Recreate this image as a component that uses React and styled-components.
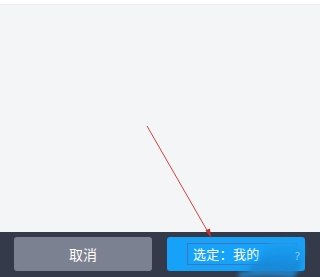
import React from 'react';
import styled, { createGlobalStyle } from 'styled-components';

const GlobalStyle = createGlobalStyle`
  html, body {
    margin: 0;
    padding: 0;
    background: #ffffff;
  }
  body {
    font-family: "Noto Sans CJK SC", "Noto Sans", sans-serif;
  }
`;

const Screen = styled.div`
  position: relative;
  width: 320px;
  height: 277px;
  display: flex;
  flex-direction: column;
  overflow: hidden;
  background: #ffffff;
`;

const Content = styled.div`
  flex: 1;
  margin-top: 4px;
  background: #f4f5f7;
  border-top: 1px solid #e9eaed;
`;

const BottomBar = styled.div`
  height: 45px;
  box-sizing: border-box;
  padding: 5px 15px 6px 14px;
  background: #343a49;
  display: flex;
  gap: 15px;
`;

const Button = styled.div`
  width: 138px;
  box-sizing: border-box;
  border-radius: 3px;
  display: flex;
  align-items: center;
  justify-content: ${p => (p.$primary ? 'flex-start' : 'center')};
  padding-left: ${p => (p.$primary ? '20px' : '0')};
  background: ${p => (p.$primary ? '#16a2f8' : '#7c8191')};
  color: #ffffff;
  font-size: 14px;
`;

const Label = styled.span`
  box-sizing: border-box;
  width: 110px;
  height: 22px;
  border: 1px solid #4a72b8;
  padding-left: 5px;
  font-size: 13px;
  line-height: 20px;
  letter-spacing: 0.3px;
`;

const Overlay = styled.svg`
  position: absolute;
  left: 0;
  top: 0;
  pointer-events: none;
`;

export default function App() {
  return (
    <>
      <GlobalStyle />
      <Screen>
        <Content />
        <BottomBar>
          <Button>取消</Button>
          <Button $primary>
            <Label>选定：我的</Label>
          </Button>
        </BottomBar>
        <Overlay width="320" height="277" viewBox="0 0 320 277">
          <defs>
            <filter id="blur" x="-30%" y="-30%" width="160%" height="160%">
              <feGaussianBlur stdDeviation="2" />
            </filter>
          </defs>
          <g filter="url(#blur)" strokeLinecap="round" fill="none">
            <path d="M272 246 C 282 243, 292 243, 300 246" stroke="#1c9ef0" strokeWidth="7" opacity="0.9" />
            <path d="M266 253 C 278 250, 290 250, 300 253" stroke="#1a98ea" strokeWidth="8" opacity="0.9" />
            <path d="M262 261 C 274 258, 288 258, 298 261" stroke="#1790e2" strokeWidth="9" opacity="0.9" />
            <path d="M254 268 C 266 266, 282 266, 296 268" stroke="#1688d8" strokeWidth="9" opacity="0.9" />
            <path d="M242 275 C 256 273, 276 273, 292 275" stroke="#2684c8" strokeWidth="7" opacity="0.85" />
          </g>
          <text x="295" y="260" fill="#8fd0f8" fontSize="11" fontFamily="Noto Sans, sans-serif">?</text>
          <line x1="147" y1="126" x2="208" y2="232" stroke="#d9413f" strokeWidth="1" />
          <path d="M211 238 L 205.5 230.5 L 210 228.5 Z" fill="#c8302f" />
        </Overlay>
      </Screen>
    </>
  );
}
